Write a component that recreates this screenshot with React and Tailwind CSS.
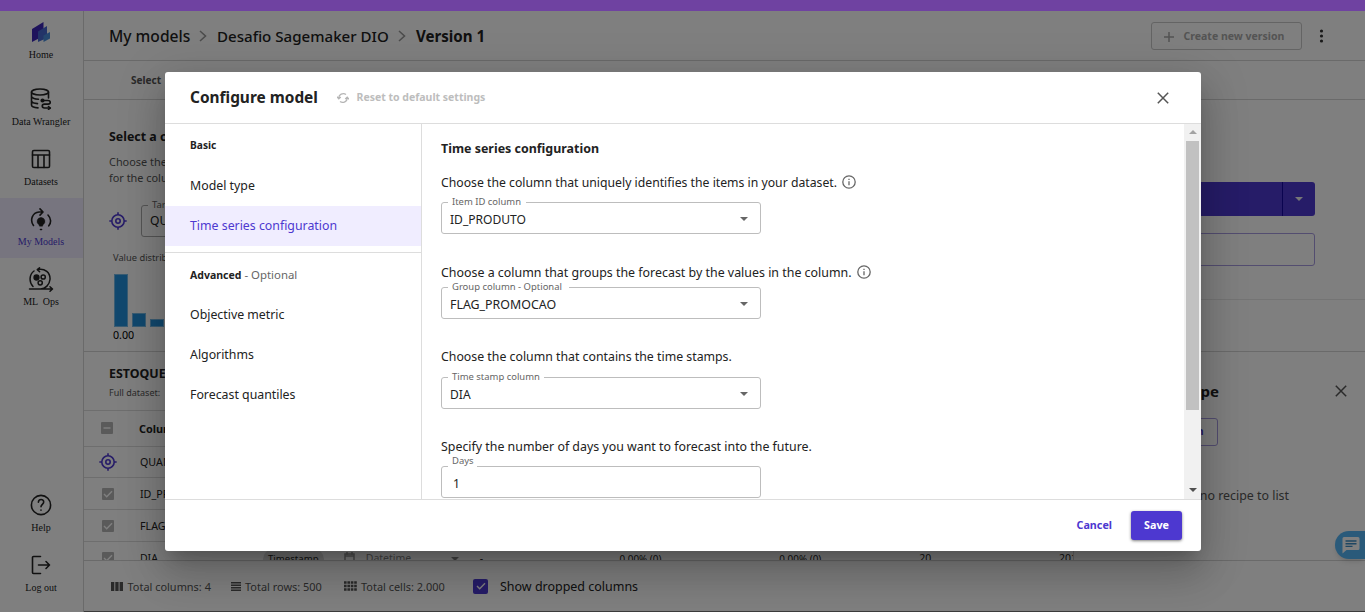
const NAV_BASE = "flex h-[60px] w-[83px] shrink-0 flex-col items-center";

function NavItem({ icon, label, active }) {
  return (
    <div className={active ? `${NAV_BASE} bg-[#eeebff] text-[#4d38d0]` : `${NAV_BASE} text-[#222]`}>
      <div className="flex h-[37px] w-full shrink-0 items-center justify-center pr-px pt-[5px] text-[#222]">{icon}</div>
      <div className="whitespace-pre pr-px pt-[1px] font-['Liberation_Serif',serif] text-[10px] leading-[12px]">{label}</div>
    </div>
  );
}

const stroke = { fill: "none", stroke: "currentColor", strokeWidth: 1.6, strokeLinecap: "round", strokeLinejoin: "round" };

const HomeIcon = () => (
  <svg width="20" height="21" viewBox="0 0 20 21">
    <path d="M1 7 12.500 0v14L1 20z" fill="#3d27b8" />
    <path d="M7 9.500 16 4v12L7 20z" fill="#4668d0" />
    <path d="M12.500 13.500 19 10v6.500L12.500 20z" fill="#4b8fdc" />
  </svg>
);

const WranglerIcon = () => (
  <svg width="22" height="22" viewBox="0 0 22 22" {...stroke}>
    <ellipse cx="10" cy="4" rx="8.500" ry="3" />
    <path d="M1.500 4v13c0 1.500 3 2.600 6.500 2.900M1.500 8.500C2 10 5 11 8.500 11.200M1.500 13c.5 1.400 3 2.400 6 2.600M18.500 4v6" />
    <path d="M12.500 12.500h5.500c3 0 3 3.600 0 3.600h-3.500c-3 0-3 3.900 0 3.900h5.500" />
    <circle cx="12.500" cy="12.500" r="1.300" fill="currentColor" />
    <path d="m18.500 18.500 1.800 1.500-1.800 1.300" />
  </svg>
);

const DatasetsIcon = () => (
  <svg width="20" height="20" viewBox="0 0 20 20" {...stroke}>
    <rect x="1.500" y="1.500" width="17" height="17" rx="1.300" />
    <path d="M1.500 6h17M7 6v12.500M13 6v12.500" />
  </svg>
);

const ModelsIcon = () => (
  <svg width="22" height="23" viewBox="0 0 22 23" {...stroke}>
    <path d="M3.500 17.500C-.5 12 2.500 4.500 9 4h3.500M10 .9 13 4 10 7.100M18 7c3.300 3.500 3.300 8 .8 10.800" />
    <path d="M11 9.500a3.900 3.900 0 0 0-2.100 7.200l.6 1.500h3l.6-1.500A3.900 3.900 0 0 0 11 9.500z" fill="currentColor" strokeWidth=".4" />
    <path d="M10.500 21.500h1" />
  </svg>
);

const OpsIcon = () => (
  <svg width="26" height="25" viewBox="0 0 26 25" {...stroke} strokeWidth="1.500">
    <path d="M5 19.500C.5 15 1.500 7 6 4M9.500 2.500C17 .8 22.500 6 22 12.500c-.5 5-4.500 9.500-9.500 9.500H1.500M12.500 22h11.500M11.500.8 9.300 2.600l2.300 2.200M22 19.700l2.500 2.300-2.500 2.300" />
    <circle cx="8.500" cy="10.500" r="2.400" fill="currentColor" />
    <circle cx="15.200" cy="10" r="2.100" />
    <circle cx="12.200" cy="15.800" r="2.100" />
  </svg>
);

const HelpIcon = () => (
  <svg width="22" height="22" viewBox="0 0 22 22" {...stroke}>
    <circle cx="11" cy="11" r="9.600" />
    <path d="M8.400 8.300C8.500 4.700 13.700 4.700 13.700 8c0 2.200-2.700 2.500-2.700 4.800M11 16v.3" />
  </svg>
);

const LogoutIcon = () => (
  <svg width="20" height="20" viewBox="0 0 20 20" {...stroke}>
    <path d="M9.500 1.500h-7a1 1 0 0 0-1 1v15a1 1 0 0 0 1 1h7M7.500 10h11M15 6.500l3.500 3.500-3.500 3.500" />
  </svg>
);

const TargetIcon = () => (
  <svg width="18" height="18" viewBox="0 0 18 18" fill="none" stroke="#4d38d0" strokeWidth="1.600">
    <circle cx="9" cy="9" r="6.200" />
    <circle cx="9" cy="9" r="2.200" />
    <path d="M9 .3v2.500M9 15.200v2.500M.3 9h2.500M15.200 9h2.500" />
  </svg>
);

const Close = () => (
  <svg width="12" height="12" viewBox="0 0 12 12" stroke="#555" strokeWidth="1.500">
    <path d="m.8.8 10.400 10.400M11.200.8.800 11.200" />
  </svg>
);

const Caret = () => (
  <svg width="8" height="4" viewBox="0 0 8 4"><path d="M0 0h8L4 4z" fill="currentColor" /></svg>
);

const Info = () => (
  <svg width="14" height="14" viewBox="0 0 14 14" fill="none" stroke="#666" strokeWidth="1.300">
    <circle cx="7" cy="7" r="6.200" />
    <path d="M7 6.200v4M7 3.700v1.300" />
  </svg>
);

const Chevron = () => (
  <svg width="8" height="12" viewBox="0 0 8 12" fill="none" stroke="#999" strokeWidth="1.600"><path d="m1 1 5.500 5L1 11" /></svg>
);

const Check = ({ minus }) => (
  <span className="flex size-3 items-center justify-center rounded-[1px] bg-[#b5b5b5]">
    <svg width="10" height="10" viewBox="0 0 10 10" fill="none" stroke="#fff" strokeWidth="1.400"><path d={minus ? "M1.500 5h7" : "m1 5 2.700 2.700L9 2.300"} /></svg>
  </span>
);

function Row({ icon, name }) {
  return (
    <div className="flex h-8 shrink-0 items-center border-b border-[#ddd]">
      <div className="flex w-[56px] justify-center pr-[8px]">{icon}</div>
      <div className="whitespace-nowrap pt-[2px] text-[10.700px] text-[#222]">{name}</div>
    </div>
  );
}

function Question({ children, info, className }) {
  return (
    <div className={`flex items-center gap-[5px] whitespace-nowrap leading-[20px] text-[#222] ${className}`}>
      <span>{children}</span>
      {info && <span className="-mt-[2px]"><Info /></span>}
    </div>
  );
}

function Field({ label, labelClass, value, valueClass, select, className }) {
  return (
    <div className={`relative flex h-8 w-[320px] shrink-0 items-center justify-between rounded-[3px] border border-[#bdbdbd] pr-[12px] ${className}`}>
      <span className={`absolute left-[6px] whitespace-nowrap bg-white pl-[4px] leading-[12px] text-[#666] ${labelClass}`}>{label}</span>
      <span className={`pt-[4px] leading-5 text-[#222] ${valueClass}`}>{value}</span>
      {select && <span className="pt-px text-[#666]"><Caret /></span>}
    </div>
  );
}

function Background() {
  return (
    <div className="flex min-w-0 flex-1">
      <nav className="flex w-[84px] shrink-0 flex-col border-r border-[#d5d5d5]">
        <NavItem icon={<HomeIcon />} label="Home" />
        <div className="h-[7px]" />
        <NavItem icon={<WranglerIcon />} label="Data Wrangler" />
        <NavItem icon={<DatasetsIcon />} label="Datasets" />
        <NavItem icon={<ModelsIcon />} label="My Models" active />
        <NavItem icon={<OpsIcon />} label="ML  Ops" />
        <div className="flex-1" />
        <NavItem icon={<HelpIcon />} label="Help" />
        <NavItem icon={<LogoutIcon />} label="Log out" />
        <div className="h-[8px]" />
      </nav>
      <main className="flex min-w-0 flex-1 flex-col">
        <header className="flex h-[50px] shrink-0 items-center border-b border-[#d5d5d5] pl-[25px] font-medium text-[#222]">
          <span className="w-[90px] whitespace-nowrap pt-[2px] text-[15.600px]">My models</span>
          <span className="w-[18px]"><Chevron /></span>
          <span className="w-[181px] whitespace-nowrap pt-[2px] text-[15.100px]">Desafio Sagemaker DIO</span>
          <span className="w-[18px]"><Chevron /></span>
          <span className="whitespace-nowrap pt-[2px] text-[15.100px] font-bold">Version 1</span>
          <span className="flex-1" />
          <button className="mr-[17px] flex h-7 w-[151px] items-center gap-[9.500px] rounded-[3px] border border-[#c8c8c8] pl-3 pt-[2px] text-[#a8a8a8]">
            <svg width="10" height="10" viewBox="0 0 10 10" stroke="currentColor" strokeWidth="1.500"><path d="M5 0v10M0 5h10" /></svg>
            <span className="whitespace-nowrap text-[10.530px] font-bold">Create new version</span>
          </button>
          <svg className="mr-[41px]" width="5" height="14" viewBox="0 0 5 14" fill="#333"><circle cx="2.500" cy="2" r="1.600" /><circle cx="2.500" cy="7" r="1.600" /><circle cx="2.500" cy="12" r="1.600" /></svg>
        </header>
        <div className="flex h-[39px] shrink-0 items-center border-b border-[#d5d5d5] pl-[47px] pt-[2px] text-[10.100px] font-bold text-[#555]">Select</div>
        <section className="flex h-[252px] shrink-0 justify-between border-b border-[#d5d5d5]">
          <div className="flex w-[300px] flex-col pl-[25px] pt-[27px]">
            <h2 className="text-[12.400px] font-bold leading-5 text-[#222]">Select a column</h2>
            <p className="mt-[7px] w-[200px] text-[10.900px] leading-4 text-[#555]">Choose the target<br />for the column</p>
            <div className="mt-[19px] flex items-center">
              <TargetIcon />
              <div className="relative ml-[14px] flex h-8 w-[160px] items-center rounded-[3px] border border-[#aaa] pl-2 pt-px text-[12.100px] text-[#222]">
                <span className="absolute left-[6px] top-[-8px] bg-white pl-1 text-[9.500px] leading-[14px] text-[#666]">Target</span>
                QUANTIDADE
              </div>
            </div>
            <div className="ml-[4px] mt-[14px] text-[9.300px] leading-[14px] text-[#555]">Value distribution</div>
            <div className="ml-[5px] mt-[8.500px] flex h-[53px] shrink-0 items-end gap-1">
              <div className="h-[53px] w-[14px] border border-[#75b8e4] bg-[#2291dc]" />
              <div className="h-[14px] w-[14px] border border-[#75b8e4] bg-[#2291dc]" />
              <div className="h-[8px] w-[14px] border border-[#75b8e4] bg-[#2291dc]" />
            </div>
            <div className="ml-[4px] text-[10.700px] leading-[16px] text-black">0.00</div>
          </div>
          <div className="flex flex-1 flex-col items-end">
            <div className="mr-[50px] mt-[82px] flex h-[34px] w-[280px] justify-end rounded-[3px] bg-[#4d38d0]">
              <div className="flex w-[33px] items-center justify-center border-l border-[#1408a0] text-[#eee]"><Caret /></div>
            </div>
            <div className="mr-[50px] mt-[17px] h-[33px] w-[280px] rounded-[3px] border border-[#a69be0]" />
            <div className="mt-[33px] h-px w-[280px] bg-[#e8e8e8]" />
          </div>
        </section>
        <section className="flex h-[208px] shrink-0 overflow-hidden">
          <div className="flex w-[990px] shrink-0 flex-col border-r border-[#d5d5d5]">
            <div className="flex h-[59px] shrink-0 flex-col border-b border-[#ddd] pl-[25px] pt-[12px]">
              <div className="text-[12.400px] font-bold leading-5 text-[#222]">ESTOQUE</div>
              <div className="text-[9px] leading-[17px] text-[#555]">Full dataset:</div>
            </div>
            <div className="flex h-9 shrink-0 items-center border-b border-[#ddd]">
              <div className="flex w-[55px] pb-[2px] pl-[17px]"><Check minus /></div>
              <div className="pt-px text-[10.900px] font-bold text-[#222]">Column</div>
            </div>
            <div className="-mt-px flex flex-col">
              <Row icon={<TargetIcon />} name="QUANTIDADE" />
              <Row icon={<Check />} name="ID_PRODUTO" />
              <Row icon={<Check />} name="FLAG_PROMOCAO" />
              <div className="flex h-[34px] shrink-0 items-center whitespace-nowrap text-[10.500px] text-[#222]">
                <div className="flex w-[56px] justify-center pb-[2px] pr-2"><Check /></div>
                <div className="w-[123px]">DIA</div>
                <div className="w-[61px] rounded-full bg-[#ddd] text-center text-[9.600px] leading-5">Timestamp</div>
                <svg className="mb-[2px] ml-5" width="11" height="12" viewBox="0 0 11 12" fill="none" stroke="#999" strokeWidth="1.500"><path d="M1 2h9v9H1zM1 4h9M3 0v3M8 0v3" /></svg>
                <div className="ml-[11px] w-[85px] text-[#888]">Datetime</div>
                <div className="w-[29px] text-[#888]"><Caret /></div>
                <div className="w-[140px]">-</div>
                <div className="w-[160px] text-[9.900px]">0.00% (0)</div>
                <div className="w-[140px] text-[9.900px]">0.00% (0)</div>
                <div className="w-[140px]">20</div>
                <div className="w-[14px] overflow-hidden">201</div>
              </div>
            </div>
          </div>
          <aside className="flex flex-1 flex-col">
            <div className="flex h-[63px] items-center justify-between pl-[39px] pr-[18px] pt-[15px] text-[15px] font-bold text-[#222]">
              <span className="w-[106px] whitespace-nowrap pt-px text-right">Model recipe</span><Close />
            </div>
            <div className="ml-[44px] mt-[3px] flex h-7 w-[100px] items-center justify-end rounded-[3px] border border-[#a69be0] pr-[13.500px] text-[10.500px] font-bold text-[#4d38d0]">Run</div>
            <div className="mt-[40px] w-[215px] text-right text-[12.400px] leading-5 text-[#555]">There is no recipe to list</div>
          </aside>
        </section>
        <footer className="flex flex-1 items-center border-y border-t-[#d5d5d5] border-b-[#777] pl-[27px] text-[10.950px] text-[#555]">
          <svg width="12" height="9" viewBox="0 0 12 9" fill="#555"><path d="M0 0h3.300v9H0zM4.300 0h3.300v9H4.300zM8.600 0H12v9H8.600z" /></svg>
          <span className="ml-[4.500px] w-[103.500px] whitespace-nowrap pt-[2px]">Total columns: 4</span>
          <svg width="10" height="9" viewBox="0 0 10 9" fill="#555"><path d="M0 0h10v1.500H0zM0 2.500h10V4H0zM0 5h10v1.500H0zM0 7.500h10V9H0z" /></svg>
          <span className="ml-[4px] w-[99px] whitespace-nowrap pt-[2px]">Total rows: 500</span>
          <svg width="13" height="10" viewBox="0 0 13 10" stroke="#555"><path d="M0 1.500h13M0 5h13M0 8.500h13" strokeWidth="2.600" strokeDasharray="2.600 .8" /></svg>
          <span className="ml-[4px] w-[112px] whitespace-nowrap pt-[2px]">Total cells: 2.000</span>
          <span className="flex size-[15px] items-center justify-center rounded-[2px] bg-[#4d38d0]">
            <svg width="10" height="10" viewBox="0 0 10 10" fill="none" stroke="#fff" strokeWidth="1.400"><path d="m1 5 2.700 2.700L9 2.300" /></svg>
          </span>
          <span className="ml-[12px] whitespace-nowrap pt-[3px] text-[12.480px] text-[#222]">Show dropped columns</span>
        </footer>
      </main>
      <div className="absolute right-0 top-[520px] flex h-7 w-[30px] items-center rounded-l-full bg-[#54b4f4] pl-[7px] shadow-md">
        <svg width="18" height="17" viewBox="0 0 18 17"><path d="M2 0h14a1.500 1.500 0 0 1 1.500 1.500v10a1.500 1.500 0 0 1-1.500 1.500H4.500L.5 16.500v-15A1.500 1.500 0 0 1 2 0z" fill="#fff" /><path d="M3.500 4h11M3.500 6.700h11M3.500 9.400h7" stroke="#3d8cc4" strokeWidth="1.400" /></svg>
      </div>
    </div>
  );
}

const LINK = "flex h-10 items-center whitespace-nowrap pl-[25px] text-[12.340px]";

function Dialog() {
  return (
    <div className="absolute left-[165px] top-[61px] flex h-[479px] w-[1036px] flex-col overflow-hidden rounded-[3px] bg-white text-[#222]">
      <div className="flex h-[52px] shrink-0 items-center border-b border-[#ddd] pl-[25px] pr-[32px]">
        <h1 className="w-[147px] whitespace-nowrap text-[15.430px] font-bold">Configure model</h1>
        <svg width="12" height="12" viewBox="0 0 12 12" fill="none" stroke="#b5b5b5" strokeWidth="1.300"><path d="M1.800 6.500C1.500 2.500 6 .3 9 2.500M10.200 5.500c.3 4-4.200 6.200-7.200 4M0 4.800l1.800 2 2-1.700M12 7.200l-1.800-2-2 1.700" /></svg>
        <span className="ml-[7.500px] flex-1 whitespace-nowrap text-[10.510px] font-bold text-[#bdbdbd]">Reset to default settings</span>
        <Close />
      </div>
      <div className="flex h-[375px] shrink-0">
        <div className="w-[257px] shrink-0 border-r border-[#ddd]">
          <div className="flex h-[42px] items-center pl-[25px] pt-[2px] text-[10.200px] font-bold">Basic</div>
          <div className={LINK}>Model type</div>
          <div className={`${LINK} bg-[#f0edff] text-[#4d38d0]`}>Time series configuration</div>
          <div className="mt-[6px] flex h-[43px] items-baseline border-t border-[#ddd] pl-[25px] pt-[13px] text-[10.530px]"><b>Advanced</b><span className="pl-[3px] text-[11.400px] text-[#666]">- Optional</span></div>
          <div className={LINK}>Objective metric</div>
          <div className={LINK}>Algorithms</div>
          <div className={LINK}>Forecast quantiles</div>
        </div>
        <div className="flex min-w-0 flex-1 flex-col overflow-hidden pl-[19px] pt-[15px]">
          <h2 className="text-[12.440px] font-bold leading-[20px]">Time series configuration</h2>
          <Question className="mt-[14px] text-[12.240px]" info>Choose the column that uniquely identifies the items in your dataset.</Question>
          <Field className="mt-[9px]" label="Item ID column" labelClass="top-[-7px] w-[78px] text-[9.460px]" value="ID_PRODUTO" valueClass="pl-2 text-[12.070px]" select />
          <Question className="mt-[29px] gap-[4px] text-[12.410px]" info>Choose a column that groups the forecast by the values in the column.</Question>
          <Field className="mt-[4px]" label="Group column - Optional" labelClass="top-[-7px] w-[121px] text-[9.460px]" value="FLAG_PROMOCAO" valueClass="pl-2 text-[12.400px]" select />
          <Question className="mt-[28px] text-[12.320px]">Choose the column that contains the time stamps.</Question>
          <Field className="mt-[10px]" label="Time stamp column" labelClass="top-[-7px] w-[96px] text-[9.460px]" value="DIA" valueClass="pl-2 text-[12.070px]" select />
          <Question className="mt-[28px] text-[12.380px]">Specify the number of days you want to forecast into the future.</Question>
          <Field className="mt-[9px]" label="Days" labelClass="top-[-12px] w-[29px] pb-px text-[9.460px]" value="1" valueClass="pl-[11px] text-[12.070px]" />
        </div>
        <div className="flex w-[17px] shrink-0 flex-col items-center bg-[#f1f1f1]">
          <span className="flex h-[17px] rotate-180 items-center text-[#a3a3a3]"><Caret /></span>
          <span className="h-[269px] w-[13px] bg-[#c1c1c1]" />
          <span className="flex-1" />
          <span className="flex h-[17px] items-center pb-px text-[#505050]"><Caret /></span>
        </div>
      </div>
      <div className="flex flex-1 items-center justify-end border-t border-[#ddd] pr-[19px] text-[10.750px] font-bold">
        <button className="mr-[19px] text-[#4d38d0]">Cancel</button>
        <button className="h-[29px] w-[51px] rounded-[3px] bg-[#4d38d0] text-white shadow-[0_1px_3px_rgba(0,0,0,0.5)]">Save</button>
      </div>
    </div>
  );
}

export default function App() {
  return (
    <div className="flex h-[612px] w-[1365px] flex-col overflow-hidden bg-white font-['Noto_Sans',sans-serif]">
      <div className="h-[11px] shrink-0 bg-[#6f42a1]" />
      <div className="relative flex flex-1 overflow-hidden">
        <Background />
        <div className="absolute inset-0 bg-black/50" />
        <div className="absolute left-[165px] top-[61px] h-[479px] w-[1036px] rounded-[3px] shadow-[0_11px_15px_-7px_rgba(0,0,0,0.2),0_24px_38px_3px_rgba(0,0,0,0.14),0_9px_46px_8px_rgba(0,0,0,0.12)]" />
        <Dialog />
      </div>
    </div>
  );
}
